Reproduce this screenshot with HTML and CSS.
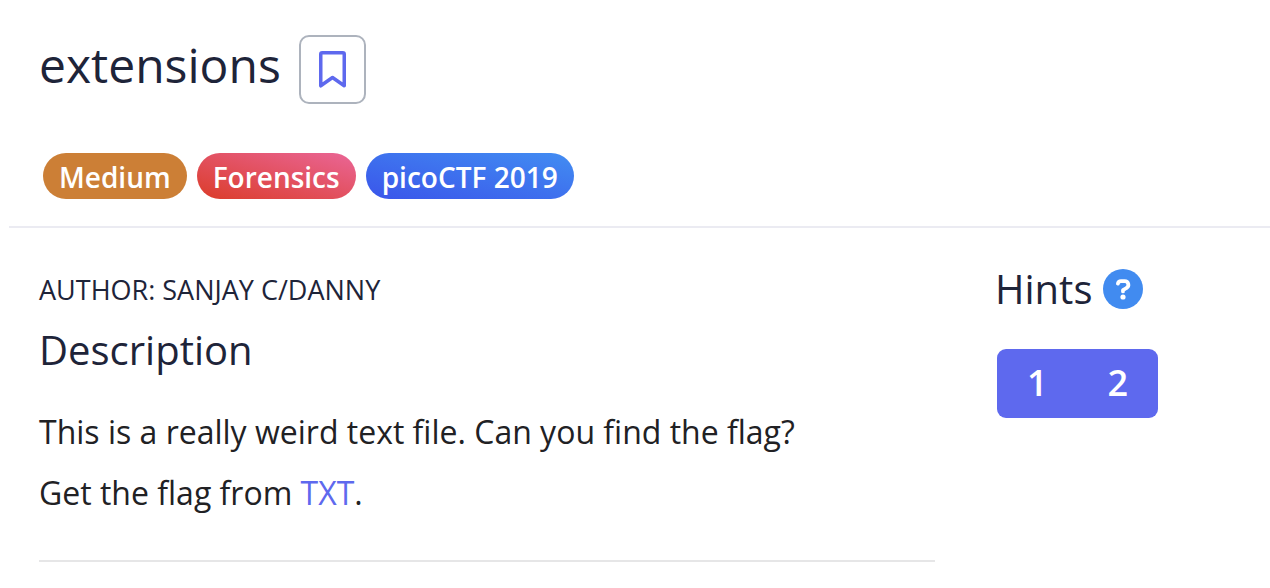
FILE: index.html
```html
<!DOCTYPE html>
<html lang="en">
<head>
  <meta charset="UTF-8" />
  <meta name="viewport" content="width=device-width, initial-scale=1.0"/>
  <title>extensions</title>
  <link rel="stylesheet" href="styles.css">
</head>
<body>

  <header class="challenge-header">
    <div class="title-row">
      <h1>extensions</h1>
      <button class="bookmark-btn" aria-label="Bookmark">
        <svg width="27" height="37" viewBox="0 0 27 37" fill="none" stroke="#5e69ee" stroke-width="3.5" stroke-linejoin="round">
          <path d="M1.75 3.25Q1.75 1.75 3.25 1.75H23.75Q25.25 1.75 25.25 3.25V34.8L13.5 26.5L1.75 34.8Z"/>
        </svg>
      </button>
    </div>
    <div class="tags">
      <span class="tag tag-medium">Medium</span>
      <span class="tag tag-forensics">Forensics</span>
      <span class="tag tag-event">picoCTF 2019</span>
    </div>
  </header>

  <main class="challenge-body">
    <section class="details">
      <div class="author">AUTHOR: SANJAY C/DANNY</div>
      <h2>Description</h2>
      <p>This is a really weird text file. Can you find the flag?</p>
      <p>Get the flag from <a href="#">TXT</a>.</p>
    </section>
    <aside class="hints">
      <div class="hints-title">
        <h2>Hints</h2>
        <svg class="help" width="40" height="40" viewBox="0 0 40 40" fill="none">
          <circle cx="20" cy="20" r="20" fill="#418bf0"/>
          <path d="M14.9 14.6Q15.4 12.1 18 12.1H21.6A3.7 3.7 0 0 1 23.5 19L20 21.2V22.4" stroke="#fff" stroke-width="3.8" stroke-linecap="round" stroke-linejoin="round"/>
          <circle cx="20" cy="28" r="2.6" fill="#fff"/>
        </svg>
      </div>
      <div class="hint-group">
        <button>1</button>
        <button>2</button>
      </div>
    </aside>
  </main>

</body>
</html>
```
FILE: styles.css
```css
body {
  font-family: "Open Sans", sans-serif;
  background-color: #fff;
  color: #1e2439;
  margin: 0;
  height: 588px;
  overflow: hidden;
}
h1, h2, p {
  margin: 0;
  font-weight: 400;
}
button {
  font-family: inherit;
  padding: 0;
  cursor: pointer;
}
.challenge-header {
  box-sizing: border-box;
  height: 227.5px;
  margin-left: 9px;
  padding: 35px 0 0 30px;
  border-bottom: 2px solid #ebebf2;
}
.title-row {
  display: flex;
  gap: 19px;
  height: 70px;
}
h1 {
  width: 241px;
  font-size: 48px;
  line-height: 60px;
}
.bookmark-btn {
  box-sizing: border-box;
  width: 67px;
  height: 69px;
  margin-top: 0.4px;
  display: flex;
  align-items: center;
  justify-content: center;
  background: #fff;
  border: 2px solid #adb3bd;
  border-radius: 10px;
}
.tags {
  display: flex;
  gap: 10px;
  margin: 48.4px 0 0 4px;
}
.tag {
  height: 46px;
  padding: 0 16px;
  border-radius: 23px;
  color: #fff;
  font-size: 28px;
  font-weight: 600;
  line-height: 48px;
}
.tag-medium {
  background: #cc7f36;
}
.tag-forensics {
  background: linear-gradient(to top right, #db3c2a, #ea6697);
}
.tag-event {
  background: linear-gradient(to top right, #3a55ea, #428df2);
}
.challenge-body {
  display: flex;
  padding-left: 39px;
}
.details {
  box-sizing: border-box;
  width: 896px;
  height: 334px;
  padding-top: 42.5px;
  border-bottom: 2px solid #e6e6e7;
}
.author {
  font-size: 27px;
  line-height: 40px;
}
h2 {
  font-size: 40px;
  line-height: 54px;
}
.details h2 {
  margin: 13px 0 24px;
}
.details p {
  height: 61px;
  color: #212124;
  font-size: 32px;
  line-height: 61px;
}
.details a {
  color: #5e69ee;
  text-decoration: none;
}
.hints {
  margin-left: 60px;
  padding-top: 34.5px;
}
.hints-title {
  display: flex;
  gap: 11px;
}
.help {
  margin-top: 6.5px;
}
.hint-group {
  display: flex;
  width: 161px;
  height: 69px;
  margin: 32.5px 0 0 2px;
  border-radius: 9px;
  background: #5e69ee;
}
.hint-group button {
  flex: 1;
  border: none;
  background: none;
  color: #fff;
  font-size: 36px;
  font-weight: 600;
  padding-bottom: 2px;
}
```
